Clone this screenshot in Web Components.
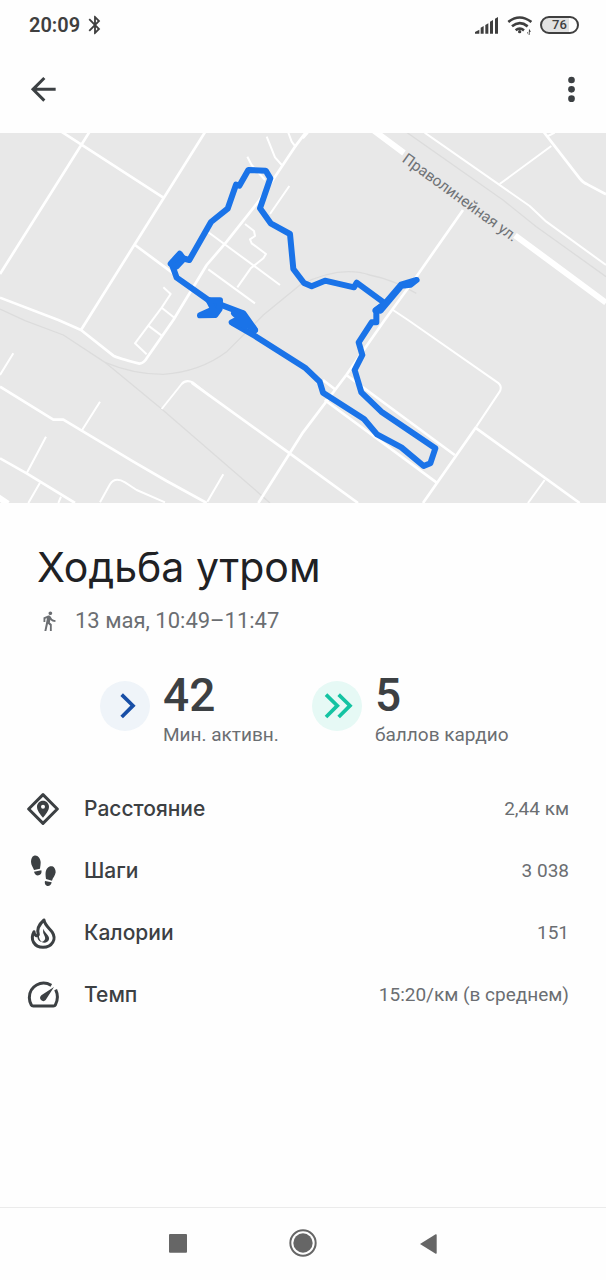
<!DOCTYPE html>
<html lang="ru">
<head>
<meta charset="utf-8">
<meta name="viewport" content="width=device-width, initial-scale=1">
<title>Ходьба утром</title>
<style>
  html, body { margin: 0; }
  body { background: #fefefe; color: #3c4043; font-family: Roboto, "Noto Sans", sans-serif; }
</style>
</head>
<body>
<activity-page></activity-page>
<script>
const ICONS = {
  bluetooth: ['0 0 24 24', '<path d="M17.7 7.7L12 2h-1v7.6L6.4 5 5 6.4l5.6 5.6L5 17.6 6.4 19l4.6-4.6V22h1l5.7-5.7-4.3-4.3 4.3-4.3zM13 5.8l1.9 1.9L13 9.6V5.8zm1.9 10.5L13 18.2v-3.8l1.9 1.9z"/>'],
  signal: ['519 45 72 54', '<path d="M519 98v-5l13-7v12zM536 98V80l9-5v23zM550 98V72l9-5v31zM564 98V62l9-5v41zM579 98V53l9-5v50z"/>'],
  wifi: ['612 45 75 60', '<g fill="none" stroke="currentColor" stroke-width="8"><path d="M616 66q34-27 69 0"/><path d="M627 79q23-19 47 0"/><path d="M638 91q12-10 25 0"/></g><circle cx="650" cy="95" r="5"/><path d="M678 86l6 9h-4v9l-3 1zM675 103l-3-6h3z"/>'],
  back: ['90 228 81 81', '<path d="M133 234L99 268l34 34M100 268h67" fill="none" stroke="currentColor" stroke-width="9"/>'],
  more: ['792 228 30 81', '<circle cx="807" cy="240" r="10"/><circle cx="807" cy="268" r="10"/><circle cx="807" cy="296" r="10"/>'],
  walk: ['0 0 24 24', '<path d="M13.5 5.5c1.1 0 2-.9 2-2s-.9-2-2-2-2 .9-2 2 .9 2 2 2zM9.8 8.9L7 23h2.1l1.8-8 2.1 2v6h2v-7.5l-2.1-2 .6-3C14.8 12 16.8 13 19 13v-2c-1.9 0-3.5-1-4.3-2.4l-1-1.6c-.4-.6-1-1-1.7-1-.3 0-.5.1-.8.1L6 8.3V13h2V9.6l1.8-.7"/>'],
  chevron: ['30 51 150 150', '<circle cx="105" cy="126" r="75" fill="#eff4f9"/><path d="M95 92l34 33-34 34" fill="none" stroke="#174ea6" stroke-width="11"/>'],
  chevrons: ['667 51 150 150', '<circle cx="742" cy="126" r="75" fill="#e6f9f5"/><path d="M709 92l34 33-34 34M747 92l34 33-34 34" fill="none" stroke="#14c3a2" stroke-width="11"/>'],
  distance: ['36 39 96 96', '<path d="M84 44L41 87l43 43 43-43z" fill="none" stroke="currentColor" stroke-width="9" stroke-linejoin="round"/><path fill-rule="evenodd" d="M84 62c-10 0-18 8-18 18 0 12 10 23 18 33 8-10 18-21 18-33 0-10-8-18-18-18zm0 12a6 6 0 1 1 0 12 6 6 0 0 1 0-12z"/>'],
  steps: ['36 225 96 96', '<path d="M57 227c11-3 19 7 20 19 0 8-1 13-2 20l-18 4c-2-7-9-15-9-25 0-9 3-16 9-18zM57 275l22-4c2 8-1 14-8 15s-12-3-14-11zM112 259c-10-3-18 6-20 17-1 9 0 14 1 21l18 5c2-8 10-15 11-25 0-9-4-16-10-18zM90 303l20 4c-1 8-7 12-13 11s-9-7-7-15z"/>'],
  fire: ['36 411 96 96', '<path d="M87 420C71 434 65 448 70 464C66 470 58 467 57 455C44 478 58 502 84 502C112 502 125 477 112 457C103 444 90 437 87 420Z" fill="none" stroke="currentColor" stroke-width="9" stroke-linejoin="round"/><path d="M86 446c2 14 19 20 16 32-2 9-14 13-22 8 8-2 12-8 10-15-2-8-9-13-4-25zM72 464c-1 11 3 18 10 22-10 0-16-9-15-20z"/>'],
  pace: ['36 597 96 96', '<path d="M109 616c-30-17-66 2-66 37 0 9 3 16 6 22 1 2 3 3 6 3h60c3 0 5-1 6-3 8-15 8-31 1-46" fill="none" stroke="currentColor" stroke-width="9"/><path d="M117 621l-25 39c-4 5-10 4-14 0s-4-9 1-14z"/>'],
  recents: ['114 90 54 81', '<rect x="114" y="102" width="54" height="56" rx="3"/>'],
  home: ['477 90 84 84', '<circle cx="519" cy="132" r="29"/><circle cx="519" cy="132" r="38" fill="none" stroke="currentColor" stroke-width="6"/>'],
  previous: ['862 90 54 81', '<path d="M865 132l47-29q3-1 3 2v54q0 3-3 2z"/>']
};

const define = (name, html, setup) => {
  const template = document.createElement('template');
  template.innerHTML = html;
  customElements.define(name, class extends HTMLElement {
    static observedAttributes = ['name', 'icon'];
    constructor() {
      super();
      this.attachShadow({ mode: 'open' }).append(template.content.cloneNode(true));
    }
    connectedCallback() { if (setup) setup(this, this.shadowRoot); }
    attributeChangedCallback() { if (setup) setup(this, this.shadowRoot); }
  });
};

const passIcon = (host, root) =>
  root.querySelector('fit-icon').setAttribute('name', host.getAttribute('icon'));

define('fit-icon', `
<style>
  :host { display: block; flex: none; line-height: 0; }
  svg { display: block; width: 100%; height: 100%; fill: currentColor; }
</style>
<svg aria-hidden="true"></svg>`, (host, root) => {
  const icon = ICONS[host.getAttribute('name')];
  if (!icon) return;
  const svg = root.querySelector('svg');
  svg.setAttribute('viewBox', icon[0]);
  svg.innerHTML = icon[1];
});

define('status-bar', `
<style>
  :host { display: flex; align-items: center; height: 50px; padding: 0 27px 0 29px; color: #3f3f3f; }
  .time { font-size: 20px; line-height: 24px; font-weight: 600; }
  .end { display: flex; align-items: center; margin-left: auto; }
  .bluetooth { width: 24px; height: 22px; margin-left: 3px; }
  .signal { width: 24px; height: 18px; }
  .wifi { width: 25px; height: 20px; margin: 0 8px; }
  .battery { box-sizing: border-box; width: 39px; height: 18px; border: 2px solid; border-radius: 9px;
    font-size: 13px; line-height: 14px; font-weight: 500; text-align: center;
    background: linear-gradient(90deg, #e2e2e2 76%, #fefefe 76%); }
</style>
<span class="time">20:09</span>
<fit-icon class="bluetooth" name="bluetooth"></fit-icon>
<div class="end">
  <fit-icon class="signal" name="signal"></fit-icon>
  <fit-icon class="wifi" name="wifi"></fit-icon>
  <span class="battery">76</span>
</div>`);

define('app-bar', `
<style>
  :host { display: flex; align-items: center; justify-content: space-between; height: 79px; padding: 0 16px 4px 15px; }
  button { display: grid; place-items: center; width: 56px; height: 56px; padding: 0; border: 0; background: none; color: #3c4043; cursor: pointer; }
  button:last-of-type { width: 38px; }
  fit-icon { width: 27px; height: 27px; }
</style>
<button type="button" aria-label="Назад"><fit-icon name="back"></fit-icon></button>
<button type="button" aria-label="Ещё"><fit-icon name="more"></fit-icon></button>`);

define('route-map', `
<style>
  :host { display: block; background: #e8e8e8; }
  svg { display: block; width: 100%; height: auto; }
  path { fill: none; stroke-linejoin: round; }
  .rail path { stroke: #dcdcdc; stroke-width: 4; }
  .lane path { stroke: #fff; stroke-width: 6; }
  .road path { stroke: #fff; stroke-width: 8; }
  .avenue path { stroke: #fff; stroke-width: 18; }
  .route path { stroke: #1a73e8; stroke-width: 18; stroke-linecap: round; }
  .route .knot { fill: #1a73e8; }
  text { font: 46px Roboto, "Noto Sans", sans-serif; fill: #6f7276; stroke: #e8e8e8; stroke-width: 8; paint-order: stroke; }
</style>
<svg viewBox="0 0 1818 1110" role="img" aria-label="Карта маршрута">
  <g class="rail">
    <path d="M1210-9L1509 201L1609 281L1818 431"/>
    <path d="M0 528L75 563L190 606L315 688L485 828L720 1031L810 1110"/>
    <path d="M315 688Q400 724 490 724Q600 716 680 656L790 546L900 456Q1020 396 1109 426Q1180 440 1249 481"/>
  </g>
  <g class="lane">
    <path d="M620 294L840 456M625 409L765 511M735 273L762 294L765 309L750 319L755 331L798 363L790 376L752 406L712 463"/>
    <path d="M868 159L810 243M800 11L825 73L848 99M865-1L875 26L888 43M742 71L755 96L795 141"/>
    <path d="M490 463L512 483L485 524L405 631L440 664M485 524L525 556M445 578L485 608"/>
    <path d="M40 661L0 726M300 806L245 893M670 1024L622 1106M138 911L80 1021M120 1049L85 1110M183 1091L175 1110"/>
    <path d="M300 1108L330 1054Q345 1030 375 1048L410 1071L495 1108"/>
    <path d="M485 828L545 753Q558 738 580 749L630 789"/>
    <path d="M1179 531L1224 561L1489 746Q1509 758 1499 776L1429 881M1634 1041L1584 1110M1499 153L1654 39M1644 9L1664-1M909 16L924-1"/>
    <path d="M1274-1L1589 219L1639 266L1818 396"/>
  </g>
  <g class="road">
    <path d="M175-10L490 194M272-9L0 423M619-9L243 591M405 336L560 451"/>
    <path d="M0 494L175 561L243 591L340 668Q350 675 418 692Q432 690 440 676L520 561L620 396L680 326L775 206L885 41L925-12"/>
    <path d="M0 761L160 860H190L245 893L400 986L500 1044L620 1110M0 976L80 1021L225 1110"/>
    <path d="M575 749L865 958L1074 1110M775 1110L909 898L1039 726L1154 561L1249 431L1389 231"/>
    <path d="M1039 726L1364 966M969 741L1004 768M974 801L1309 1048M1429 881L1269 1110M1429 886L1739 1110"/>
    <path d="M1629-6L1739 136Q1750 150 1762 154L1818 184"/>
  </g>
  <g class="avenue">
    <path d="M1110-16L1212 60M1545 307L1818 509M-6 1092L24 1112"/>
  </g>
  <g class="route">
    <path d="M545 375L568 381L633 267L683 227L708 155L718 158L745 111L797 113L811 136L780 226L812 271L870 303L880 408L912 450L935 460L975 443L1062 463L1070 449L1155 511L1129 531L1129 568L1115 568L1076 628L1087 666L1064 711L1084 778L1144 836L1306 946L1291 991L1271 999L1204 943L1131 904L1092 858L969 779L959 746L915 704L765 609L700 571"/>
    <path d="M545 375L515 392L530 434L625 501L730 541L765 590"/>
    <path class="knot" d="M512 392L539 362L551 378L530 400ZM626 502L660 502L659 528L646 546L600 547L640 529ZM1155 511L1203 455L1250 441L1232 455L1205 458L1142 533L1126 532Z"/>
    <path d="M702 541L718 556L695 568L718 576M722 548L734 580M726 541L765 592L722 560"/>
  </g>
  <text transform="translate(1204 84) rotate(36)">Праволинейная ул.</text>
</svg>`);

define('activity-header', `
<style>
  :host { display: block; padding: 40px 37px 0; }
  h1 { margin: 0; font: 400 41px/48px Inter, Roboto, sans-serif; color: #202124; }
  p { display: flex; align-items: center; gap: 14px; margin: 16px 0 0; font-size: 22px; line-height: 28px; color: #6b6e72; }
  fit-icon { width: 24px; height: 22px; }
</style>
<h1><slot></slot></h1>
<p><fit-icon name="walk"></fit-icon><slot name="time"></slot></p>`);

define('score-item', `
<style>
  :host { display: flex; gap: 13px; }
  fit-icon { width: 50px; height: 50px; margin-top: 10px; }
  .value { font-size: 46px; line-height: 48px; font-weight: 500; color: #3c4043; }
  .label { margin-top: 4px; font-size: 19px; line-height: 24px; color: #6b6e72; white-space: nowrap; }
</style>
<fit-icon></fit-icon>
<div><div class="value"><slot name="value"></slot></div><div class="label"><slot></slot></div></div>`, passIcon);

define('metric-row', `
<style>
  :host { display: flex; align-items: center; height: 62px; padding: 0 37px 0 27px; }
  fit-icon { width: 32px; height: 32px; color: #3c4043; }
  .label { margin-left: 25px; font: 500 21px/28px Inter, Roboto, sans-serif; color: #3c4043; }
  .value { margin-left: auto; font-size: 19px; line-height: 28px; color: #6b6e72; }
</style>
<fit-icon></fit-icon>
<span class="label"><slot></slot></span>
<span class="value"><slot name="value"></slot></span>`, passIcon);

define('nav-bar', `
<style>
  :host { display: grid; grid-template-columns: repeat(3, 125px); justify-content: center; height: 70px; padding-bottom: 2px; border-top: 1px solid #ebebeb; color: #666; }
  button { display: grid; place-items: center; padding: 0; border: 0; background: none; color: inherit; cursor: pointer; }
  fit-icon { width: 18px; height: 27px; }
  .home { width: 28px; height: 28px; }
</style>
<button type="button" aria-label="Недавние"><fit-icon name="recents"></fit-icon></button>
<button type="button" aria-label="Домой"><fit-icon class="home" name="home"></fit-icon></button>
<button type="button" aria-label="Назад"><fit-icon name="previous"></fit-icon></button>`);

define('activity-page', `
<style>
  :host { display: flex; flex-direction: column; min-height: 100vh; }
  .scores { display: grid; grid-template-columns: 212px auto; justify-content: start; margin-top: 36px; padding-left: 100px; }
  .metrics { margin-top: 31px; }
  nav-bar { margin-top: auto; }
</style>
<status-bar></status-bar>
<app-bar></app-bar>
<route-map></route-map>
<activity-header>Ходьба утром<span slot="time">13 мая, 10:49–11:47</span></activity-header>
<section class="scores">
  <score-item icon="chevron"><span slot="value">42</span>Мин. активн.</score-item>
  <score-item icon="chevrons"><span slot="value">5</span>баллов кардио</score-item>
</section>
<section class="metrics">
  <metric-row icon="distance">Расстояние<span slot="value">2,44 км</span></metric-row>
  <metric-row icon="steps">Шаги<span slot="value">3 038</span></metric-row>
  <metric-row icon="fire">Калории<span slot="value">151</span></metric-row>
  <metric-row icon="pace">Темп<span slot="value">15:20/км (в среднем)</span></metric-row>
</section>
<nav-bar></nav-bar>`);
</script>
</body>
</html>
